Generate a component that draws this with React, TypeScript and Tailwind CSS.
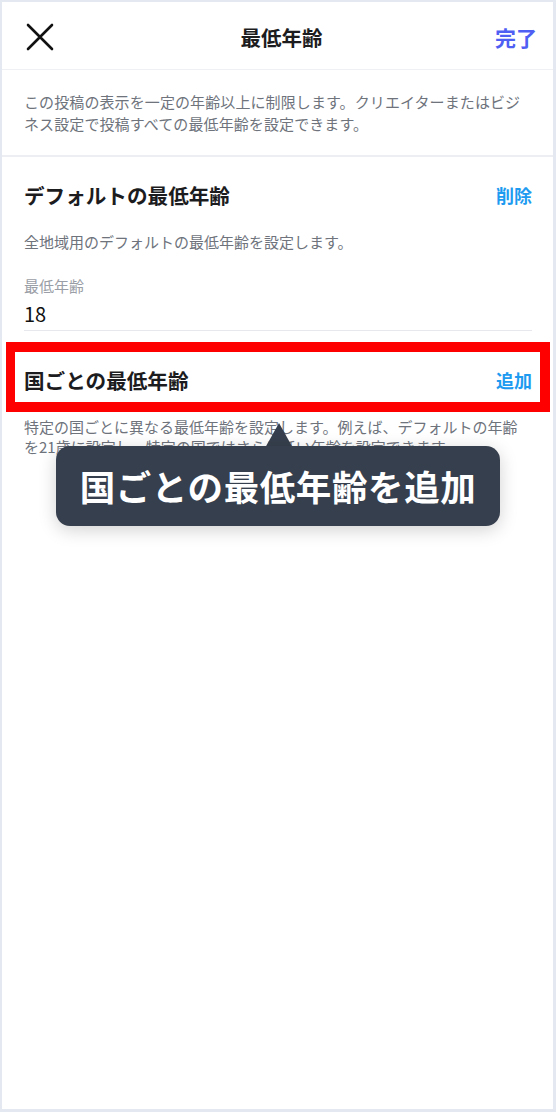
import React from "react";

const font = { fontFamily: '"Noto Sans CJK JP", "Noto Sans", sans-serif' };

export default function App() {
  return (
    <div
      className="w-[556px] h-[1112px] bg-[#e4e8f1] pt-[2px] pl-[2px] pr-[3px] pb-[3px]"
      style={font}
    >
      <div className="relative h-full bg-white flex flex-col">
        {/* Header */}
        <div className="h-[68px] grid grid-cols-[1fr_auto_1fr] items-center pl-[24px] pr-[16px] border-b border-[#eff0f3]">
          <div className="flex items-center">
            <svg width="28" height="28" viewBox="0 0 28 28" className="mt-[2px]">
              <path
                d="M2 2 L26 26 M26 2 L2 26"
                stroke="#111111"
                strokeWidth="2.6"
                strokeLinecap="round"
                fill="none"
              />
            </svg>
          </div>
          <div className="text-[20.5px] leading-[28px] font-bold text-[#1c1c1e] mt-[2px]">最低年齢</div>
          <div className="flex justify-end">
            <span className="text-[21px] leading-[28px] font-bold text-[#4f5ff3] mt-[2px]">完了</span>
          </div>
        </div>

        {/* Description */}
        <div className="pl-[22px] pr-[28px] pt-[21px] pb-[20px] text-[15px] leading-[22px] text-[#6e737c] tracking-[0.1px]">
          この投稿の表示を一定の年齢以上に制限します。クリエイターまたはビジネス設定で投稿すべての最低年齢を設定できます。
        </div>
        <div className="h-[2px] bg-[#eceef3]" />

        {/* Default section */}
        <div className="pl-[22px] pr-[21px] flex flex-col">
          <div className="mt-[24px] flex items-center justify-between">
            <span className="text-[20.6px] leading-[28px] font-bold text-[#1c1c1e]">デフォルトの最低年齢</span>
            <span className="text-[18px] leading-[28px] font-bold text-[#1d9bf0]">削除</span>
          </div>
          <div className="mt-[22px] text-[15px] leading-[22px] text-[#6e737c]">
            全地域用のデフォルトの最低年齢を設定します。
          </div>
          <div className="mt-[23px] text-[15px] leading-[20px] text-[#9a9ea6]">最低年齢</div>
          <div className="mt-[5px] pb-[3px] border-b border-[#e6e8ed] text-[20px] leading-[26px] text-[#111111]">
            18
          </div>

          <div className="mt-[35px] flex items-center justify-between">
            <span className="text-[20.6px] leading-[28px] font-bold text-[#1c1c1e]">国ごとの最低年齢</span>
            <span className="text-[18px] leading-[28px] font-bold text-[#1d9bf0]">追加</span>
          </div>
          <div className="mt-[23px] pr-[6px] text-[15px] leading-[20px] text-[#6e737c]">
            特定の国ごとに異なる最低年齢を設定します。例えば、デフォルトの年齢を21歳に設定し、特定の国ではさらに低い年齢を設定できます。
          </div>
        </div>

        {/* Red highlight */}
        <div className="absolute left-[4px] top-[340px] w-[544px] h-[70px] border-[10px] border-l-[9px] border-[#ff0000]" />

        {/* Tooltip arrow */}
        <svg
          className="absolute left-[263px] top-[421px]"
          width="28"
          height="25"
          viewBox="0 0 28 25"
        >
          <path d="M14 0 L28 25 L0 25 Z" fill="#363f4d" />
        </svg>
        {/* Tooltip */}
        <div className="absolute left-[54px] top-[444px] w-[444px] h-[80px] rounded-[14px] bg-[#363f4d] shadow-[0_4px_18px_rgba(0,0,0,0.18)] flex items-center justify-center">
          <span className="text-[35.5px] leading-[44px] font-bold text-white tracking-[0.6px]">
            国ごとの最低年齢を追加
          </span>
        </div>
      </div>
    </div>
  );
}
